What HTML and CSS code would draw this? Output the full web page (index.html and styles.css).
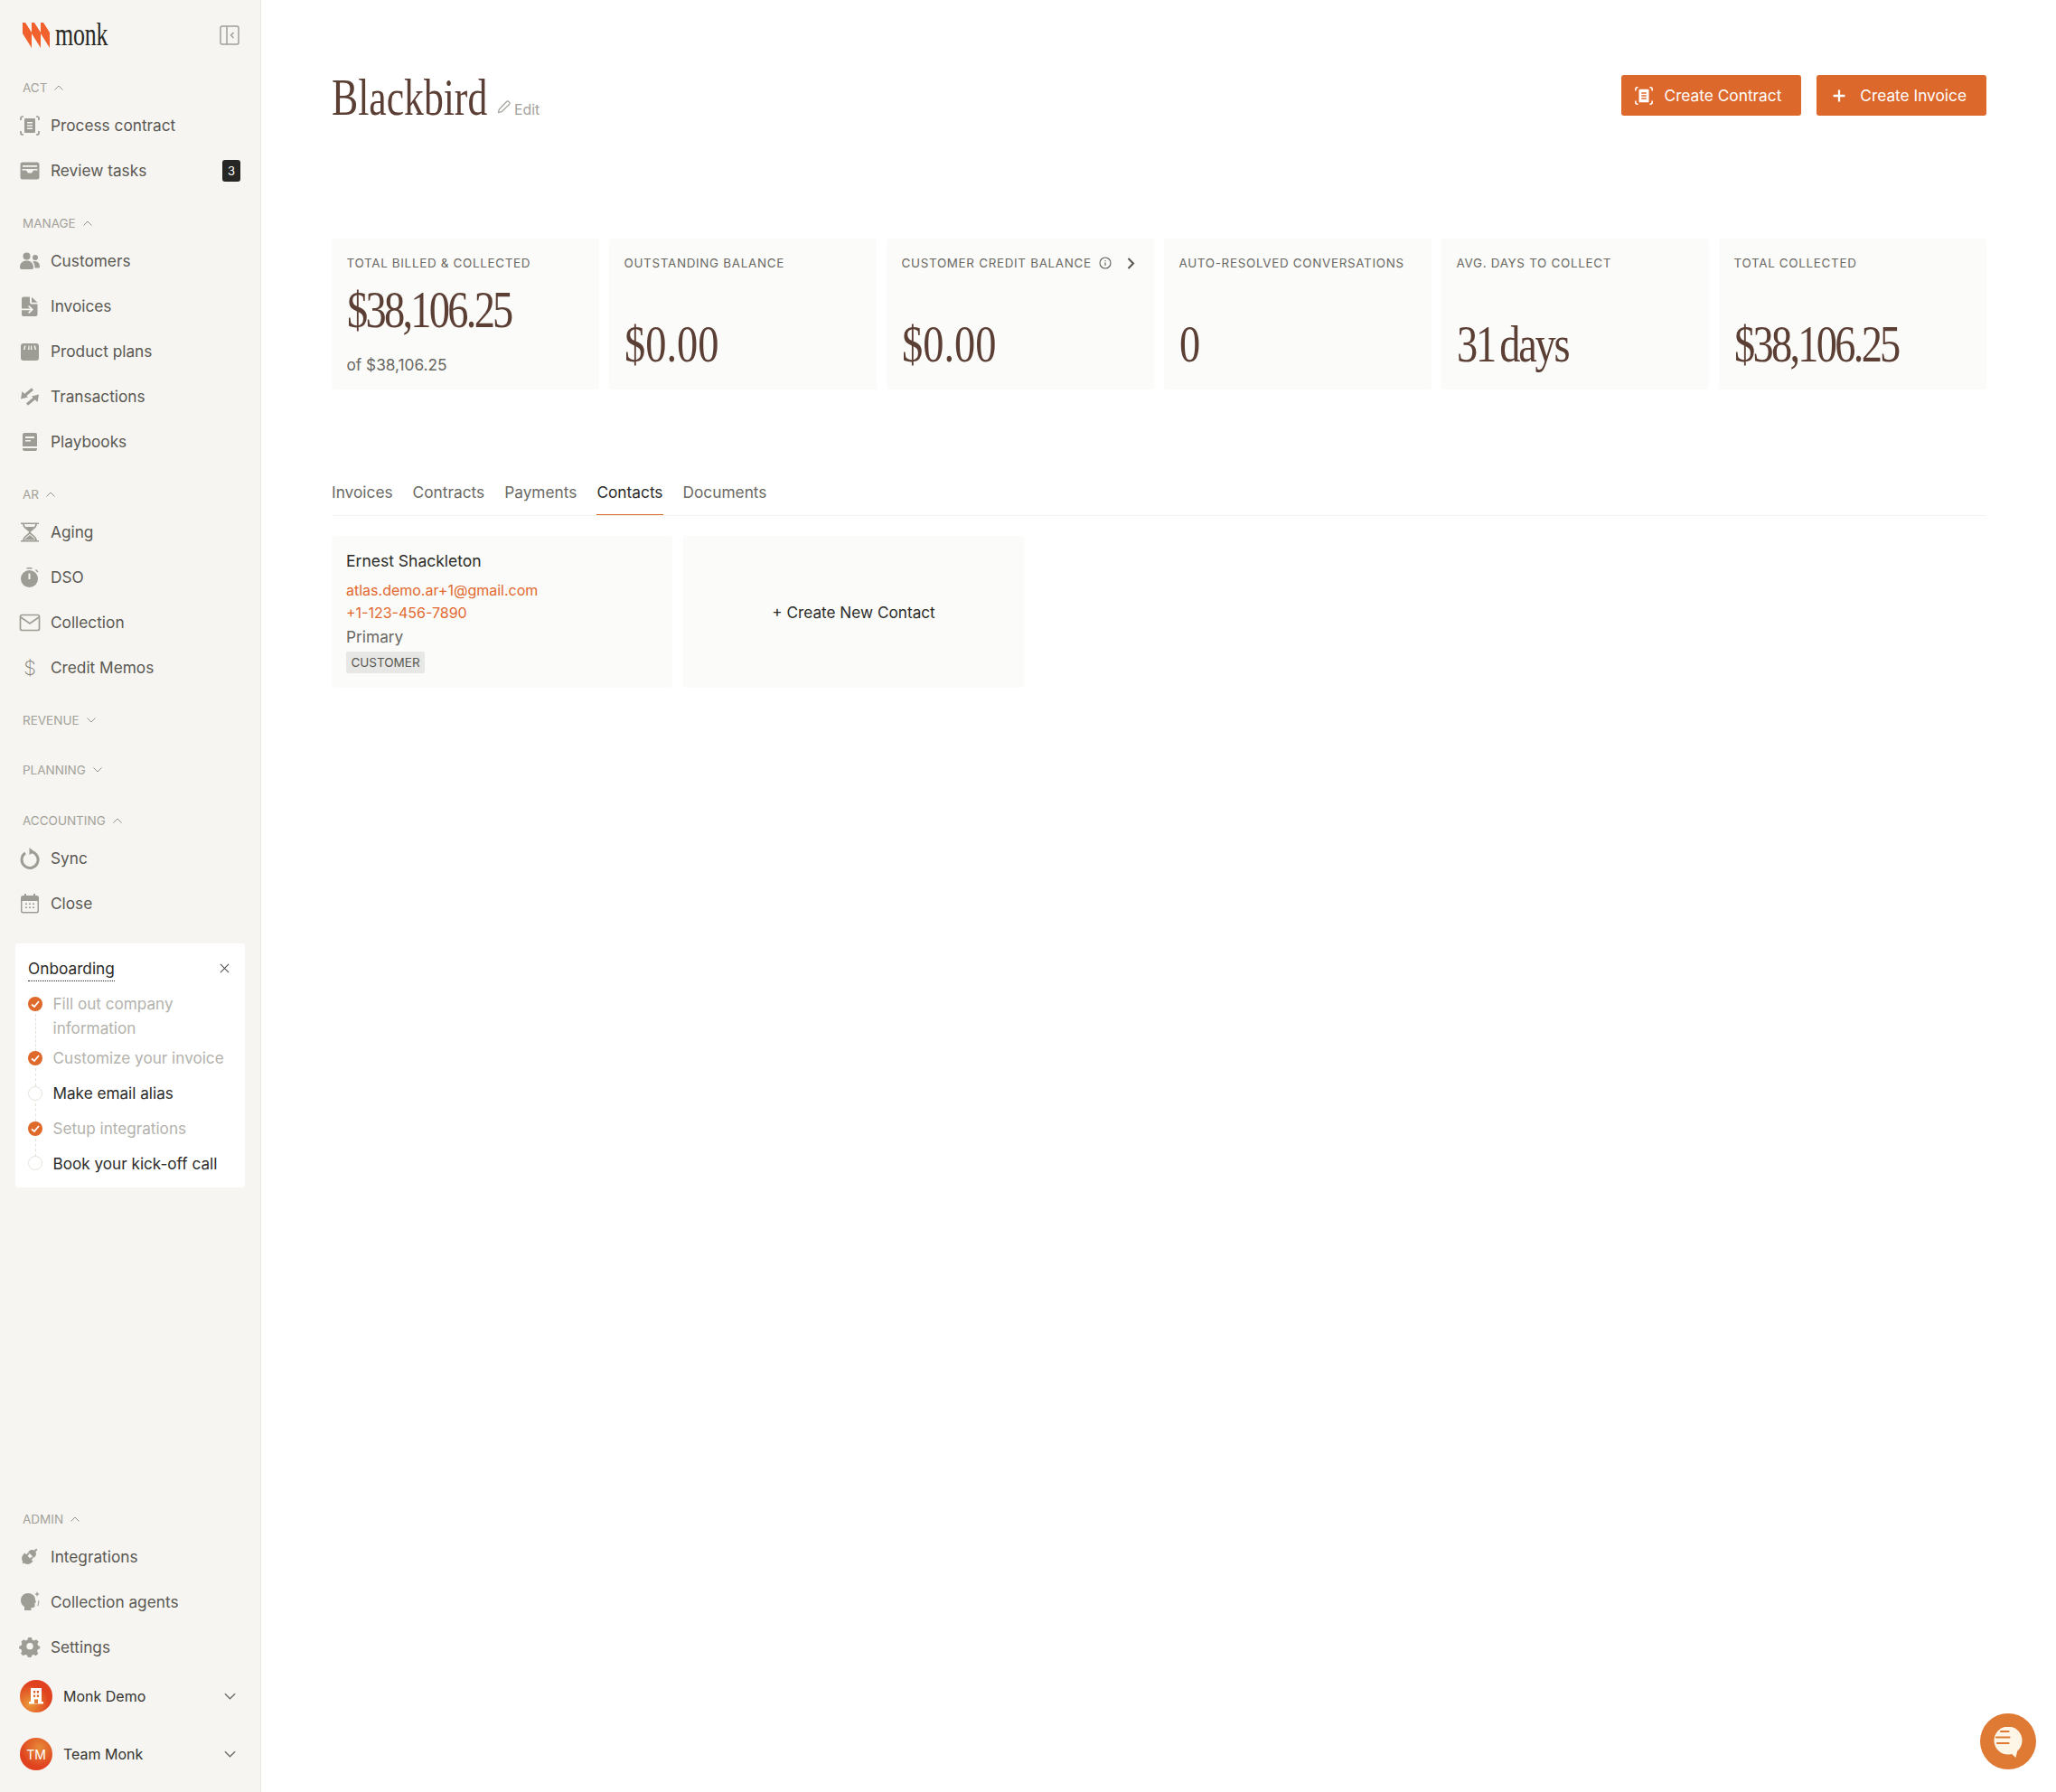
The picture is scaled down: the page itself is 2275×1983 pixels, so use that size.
FILE: index.html
```html
<!DOCTYPE html>
<html lang="en">
<head>
<meta charset="utf-8">
<title>Blackbird</title>
<link rel="stylesheet" href="styles.css">
</head>
<body>
<div class="app">
<aside class="sidebar">
  <div class="brand">
    <div class="logo">
      <svg class="logo-mark" viewBox="0 0 30 28"><path d="M0 0h3l7 11v17L0 12zM10 0h3l7 11v17L10 12zM20 0h3l7 11v17L20 12z"/></svg>
      <span class="logo-text">monk</span>
    </div>
    <svg class="collapse" viewBox="0 0 22 22"><rect x="1" y="1" width="20" height="20" rx="2"/><path d="M8 1v20M15.500 8l-3 3 3 3"/></svg>
  </div>

  <section class="nav-section">
    <div class="nav-head">ACT <svg class="chev" viewBox="0 0 10 6"><path d="M.5 5.500L5 1l4.500 4.500"/></svg></div>
    <a class="nav-item"><svg class="ico" viewBox="0 0 24 24"><path class="ln" d="M2 6V4a2 2 0 0 1 2-2h1M19 2h1a2 2 0 0 1 2 2v2M22 18v2a2 2 0 0 1-2 2h-1M5 22H4a2 2 0 0 1-2-2v-2"/><path fill-rule="evenodd" d="M7 4h10a1 1 0 0 1 1 1v14a1 1 0 0 1-1 1H7a1 1 0 0 1-1-1V5a1 1 0 0 1 1-1zm2 4v1.600h6V8zm0 3.200v1.600h6v-1.600zm0 3.200V16h6v-1.600z"/></svg>Process contract</a>
    <a class="nav-item"><svg class="ico" viewBox="0 0 24 24"><path fill-rule="evenodd" d="M4 2.500h16a2.500 2.500 0 0 1 2.500 2.500v14a2.500 2.500 0 0 1-2.500 2.500H4A2.500 2.500 0 0 1 1.500 19V5A2.500 2.500 0 0 1 4 2.500zM4 6v1.800h16V6zM3.500 10v1.500H8l2 3h4l2-3h4.500V10z"/></svg>Review tasks<span class="badge">3</span></a>
  </section>

  <section class="nav-section">
    <div class="nav-head">MANAGE <svg class="chev" viewBox="0 0 10 6"><path d="M.5 5.500L5 1l4.500 4.500"/></svg></div>
    <a class="nav-item"><svg class="ico" viewBox="0 0 24 24"><circle cx="8.500" cy="6.500" r="4"/><circle cx="18" cy="8" r="3"/><path d="M1 19c0-5 3-7.500 7.500-7.500S16 14 16 19c0 1.500-1 2-2 2H3c-1 0-2-.5-2-2zM17 12c3.500 0 6 2 6 6 0 1-.5 1.500-1.500 1.500h-4c0-3-.5-5.500-2.500-7z"/></svg>Customers</a>
    <a class="nav-item"><svg class="ico" viewBox="0 0 24 24"><path fill-rule="evenodd" d="M5 1.500h7v6a2 2 0 0 0 2 2h6.500V21a2 2 0 0 1-2 2H5a2 2 0 0 1-2-2V3.500a2 2 0 0 1 2-2zM14 1.800l6.500 6h-6.500zM3 14.500v1.800h9.500l-2.500 2.400 1.300 1.200 4.700-4.500-4.700-4.500-1.300 1.200 2.500 2.400z"/></svg>Invoices</a>
    <a class="nav-item"><svg class="ico" viewBox="0 0 24 24"><path fill-rule="evenodd" d="M5 3h14a3 3 0 0 1 3 3v13a3 3 0 0 1-3 3H5a3 3 0 0 1-3-3V6a3 3 0 0 1 3-3zM6 5.500L5 10h1.500l1-4.500zM10.500 5.500L10 10h1.500V5.500zM13 5.500V10h1.500L14 5.500zM16.500 5.500l1 4.500H19l-1-4.500z"/></svg>Product plans</a>
    <a class="nav-item"><svg class="ico" viewBox="0 0 24 24"><path class="ln ln-thick" d="M15 3.500L6 11M9 20.500l9-7.500"/><path d="M2 14.500L3.500 6l6.500 6.500zM22 9.500L20.500 18 14 11.500z"/></svg>Transactions</a>
    <a class="nav-item"><svg class="ico" viewBox="0 0 24 24"><path fill-rule="evenodd" d="M6 2h12a2 2 0 0 1 2 2v13H4V4a2 2 0 0 1 2-2zM7 6v2h10V6zm0 4v1.600h6V10zM4 19h16v1a2 2 0 0 1-2 2H6a2 2 0 0 1-2-2z"/></svg>Playbooks</a>
  </section>

  <section class="nav-section">
    <div class="nav-head">AR <svg class="chev" viewBox="0 0 10 6"><path d="M.5 5.500L5 1l4.500 4.500"/></svg></div>
    <a class="nav-item"><svg class="ico" viewBox="0 0 24 24"><path d="M2 1.500h20v1.500H2zM2 21h20v1.500H2z"/><path class="ln" d="M5 3c0 5 7 6.500 7 9s-7 4-7 9M19 3c0 5-7 6.500-7 9s7 4 7 9"/><path d="M7 6h10l-5 5zM5.500 20.500L12 15l6.500 5.500z"/></svg>Aging</a>
    <a class="nav-item"><svg class="ico" viewBox="0 0 24 24"><path fill-rule="evenodd" d="M8.500 1h6v1.500h-6zM11.500 4a9.500 9.500 0 1 1 0 19 9.500 9.500 0 0 1 0-19zM10.500 7.500v6.500h2V7.500zM19 3l2.500 2.500-1 1L18 4z"/></svg>DSO</a>
    <a class="nav-item"><svg class="ico" viewBox="0 0 24 24"><rect class="ln" x="1.500" y="3.500" width="21" height="17" rx="2"/><path class="ln" d="M2 6l10 7 10-7"/></svg>Collection</a>
    <a class="nav-item"><span class="ico-glyph">$</span>Credit Memos</a>
  </section>

  <section class="nav-section is-collapsed">
    <div class="nav-head">REVENUE <svg class="chev" viewBox="0 0 10 6"><path d="M.5.500L5 5 9.500.500"/></svg></div>
  </section>
  <section class="nav-section is-collapsed">
    <div class="nav-head">PLANNING <svg class="chev" viewBox="0 0 10 6"><path d="M.5.500L5 5 9.500.500"/></svg></div>
  </section>

  <section class="nav-section">
    <div class="nav-head">ACCOUNTING <svg class="chev" viewBox="0 0 10 6"><path d="M.5 5.500L5 1l4.500 4.500"/></svg></div>
    <a class="nav-item"><svg class="ico" viewBox="0 0 24 24"><path class="ln ln-thick" d="M7 6a9 9 0 1 0 6-1.500"/><path d="M11.500 0l5.500 4.500-5.500 3.500z"/></svg>Sync</a>
    <a class="nav-item"><svg class="ico" viewBox="0 0 24 24"><path fill-rule="evenodd" d="M6 1h2v2h8V1h2v2h1.500A2.500 2.500 0 0 1 22 5.500V20a2.500 2.500 0 0 1-2.500 2.500h-15A2.500 2.500 0 0 1 2 20V5.500A2.500 2.500 0 0 1 4.500 3H6zM3.500 9v11a1 1 0 0 0 1 1h15a1 1 0 0 0 1-1V9zM7 11.500h2v1.500H7zm4 0h2v1.500h-2zm4 0h2v1.500h-2zM7 15.500h2V17H7zm4 0h2V17h-2zm4 0h2V17h-2z"/></svg>Close</a>
  </section>

  <section class="onboarding">
    <div class="onb-head"><span class="onb-title">Onboarding</span><svg class="onb-close" viewBox="0 0 12 12"><path d="M1 1l10 10M11 1L1 11"/></svg></div>
    <ul class="steps">
      <li class="step is-done is-two"><span class="dot"><svg viewBox="0 0 16 16"><path d="M4 8.500l3 2.500 5-6"/></svg></span><span class="step-text">Fill out company information</span></li>
      <li class="step is-done"><span class="dot"><svg viewBox="0 0 16 16"><path d="M4 8.500l3 2.500 5-6"/></svg></span><span class="step-text">Customize your invoice</span></li>
      <li class="step"><span class="dot"></span><span class="step-text">Make email alias</span></li>
      <li class="step is-done"><span class="dot"><svg viewBox="0 0 16 16"><path d="M4 8.500l3 2.500 5-6"/></svg></span><span class="step-text">Setup integrations</span></li>
      <li class="step"><span class="dot"></span><span class="step-text">Book your kick-off call</span></li>
    </ul>
  </section>

  <section class="nav-section nav-bottom">
    <div class="nav-head">ADMIN <svg class="chev" viewBox="0 0 10 6"><path d="M.5 5.500L5 1l4.500 4.500"/></svg></div>
    <a class="nav-item"><svg class="ico" viewBox="0 0 24 24"><g transform="rotate(45 12 12) translate(0 1)"><path d="M7.500 7.500a4.500 4.500 0 0 1 9 0v1.500h-9zM11 0h2v4h-2zM5.500 12.500h13v2a6.500 6.500 0 0 1-13 0zM8 9.500h2v3H8zM14 9.500h2v3h-2zM11 19h2v3h-2z"/></g></svg>Integrations</a>
    <a class="nav-item"><svg class="ico" viewBox="0 0 24 24"><path d="M10 3c4.500 0 8 3 8 7 0 1 .5 2 1 3l-1.500 1v3c0 1-1 2-2 2h-2v3H6v-4c-2.500-1.500-4-4-4-7 0-4.500 3.500-8 8-8z"/><path d="M20 1l.8 2.200L23 4l-2.200.8L20 7l-.8-2.200L17 4l2.200-.8zM21.500 11l1 .3-1 6-1-.3z"/></svg>Collection agents</a>
    <a class="nav-item"><svg class="ico" viewBox="0 0 24 24"><path fill-rule="evenodd" d="M10 1.500h4l.7 2.800 2.500 1 2.500-1.400 2.800 2.800-1.400 2.500 1 2.500 2 .3v3l-2.400.7-1 2.500 1.400 2.500-2.800 2.800-2.500-1.400-2.500 1-.7 2.400h-4l-.7-2.400-2.500-1-2.500 1.400-2.800-2.800 1.400-2.500-1-2.500-2.400-.7v-3l2.400-.7 1-2.500L1.600 6.700l2.800-2.800 2.500 1.400 2.400-1zM12 8a4 4 0 1 0 0 8 4 4 0 0 0 0-8z" transform="matrix(.92 0 0 .92 1 .6)"/></svg>Settings</a>
    <div class="accounts">
      <div class="account"><span class="avatar"><svg viewBox="0 0 24 24"><path fill-rule="evenodd" d="M6 3h12v15h2v2.500H4V18h2zM9 6v2.500h2.200V6zm3.800 0v2.500H15V6zM9 10.500V13h2.200v-2.500zm3.800 0V13H15v-2.500zM10 15.500V20h4v-4.500z"/></svg></span><span class="account-name">Monk Demo</span><svg class="acct-chev" viewBox="0 0 14 8"><path d="M1 1l6 6 6-6"/></svg></div>
      <div class="account"><span class="avatar avatar-alt">TM</span><span class="account-name">Team Monk</span><svg class="acct-chev" viewBox="0 0 14 8"><path d="M1 1l6 6 6-6"/></svg></div>
    </div>
  </section>
</aside>

<main class="main">
  <header class="page-head">
    <div class="title-wrap">
      <h1 class="title">Blackbird</h1>
      <a class="edit"><svg viewBox="0 0 16 16"><path d="M1.500 14.500l.8-3.500L10.500 2.500a1.700 1.700 0 0 1 2.500 0l.5.500a1.700 1.700 0 0 1 0 2.500L5 13.700z"/></svg>Edit</a>
    </div>
    <div class="actions">
      <button class="btn"><svg viewBox="0 0 24 24"><path class="btn-ln" d="M2 6V4a2 2 0 0 1 2-2h1M19 2h1a2 2 0 0 1 2 2v2M22 18v2a2 2 0 0 1-2 2h-1M5 22H4a2 2 0 0 1-2-2v-2"/><path class="btn-fill" fill-rule="evenodd" d="M7 4h10a1 1 0 0 1 1 1v14a1 1 0 0 1-1 1H7a1 1 0 0 1-1-1V5a1 1 0 0 1 1-1zm2 4v1.600h6V8zm0 3.200v1.600h6v-1.600zm0 3.200V16h6v-1.600z"/></svg>Create Contract</button>
      <button class="btn"><svg viewBox="0 0 24 24"><path class="btn-ln btn-ln-thick" d="M12 5v14M5 12h14"/></svg>Create Invoice</button>
    </div>
  </header>

  <section class="stats">
    <div class="stat"><div class="stat-label">TOTAL BILLED &amp; COLLECTED</div><div class="stat-value is-top"><span class="serif-num is-long">$38,106.25</span></div><div class="stat-sub">of $38,106.25</div></div>
    <div class="stat"><div class="stat-label">OUTSTANDING BALANCE</div><div class="stat-value"><span class="serif-num">$0.00</span></div></div>
    <div class="stat"><div class="stat-label">CUSTOMER CREDIT BALANCE <svg class="info" viewBox="0 0 14 14"><circle cx="7" cy="7" r="6"/><path d="M7 6.500v3.500M7 4v1.200"/></svg><svg class="stat-arrow" viewBox="0 0 9 13"><path d="M1.500 1l5.500 5.500L1.500 12"/></svg></div><div class="stat-value"><span class="serif-num">$0.00</span></div></div>
    <div class="stat"><div class="stat-label">AUTO-RESOLVED CONVERSATIONS</div><div class="stat-value"><span class="serif-num">0</span></div></div>
    <div class="stat"><div class="stat-label">AVG. DAYS TO COLLECT</div><div class="stat-value"><span class="serif-num is-days">31 days</span></div></div>
    <div class="stat"><div class="stat-label">TOTAL COLLECTED</div><div class="stat-value"><span class="serif-num is-long">$38,106.25</span></div></div>
  </section>

  <nav class="tabs">
    <a class="tab">Invoices</a>
    <a class="tab">Contracts</a>
    <a class="tab">Payments</a>
    <a class="tab is-active">Contacts</a>
    <a class="tab">Documents</a>
  </nav>

  <section class="contacts">
    <div class="contact">
      <div class="contact-name">Ernest Shackleton</div>
      <div class="contact-link contact-email">atlas.demo.ar+1@gmail.com</div>
      <div class="contact-link">+1-123-456-7890</div>
      <div class="contact-role">Primary</div>
      <span class="tag">CUSTOMER</span>
    </div>
    <div class="contact contact-new">+ Create New Contact</div>
  </section>
</main>
</div>
<button class="chat" aria-label="Chat"><svg viewBox="0 0 34 36"><circle class="chat-bubble" cx="16" cy="15" r="15.500"/><path class="chat-bubble" d="M18 28l9-5-2.500 11z"/><path class="chat-lines" d="M8 5h8.500M3 11.500h14.500M4 18h12.500"/></svg></button>
</body>
</html>
```
FILE: styles.css
```css
* { box-sizing: border-box; }
html, body { margin: 0; height: 100%; }
body { font-family: Inter, "Liberation Sans", sans-serif; background: #fff; color: #2b2b29; overflow: hidden; }
.app { display: flex; height: 1983px; }

.sidebar { width: 289px; flex: none; background: #f6f5f1; border-right: 1px solid #e9e7e0; display: flex; flex-direction: column; height: 100%; }
.brand { height: 80.5px; padding: 25px 23px 0 25px; display: flex; justify-content: space-between; align-items: flex-start; }
.logo { display: flex; align-items: flex-start; gap: 6px; }
.logo-mark { width: 30px; height: 28px; fill: #f0612d; display: block; }
.logo-text { font-family: "Liberation Serif", serif; font-size: 35px; line-height: 28px; color: #2a2a27; display: inline-block; transform: scaleX(.74); transform-origin: left; letter-spacing: -.3px; }
.collapse { width: 22px; height: 22px; fill: none; stroke: #a09f98; stroke-width: 1.5; margin-top: 3px; }

.nav-section { margin-bottom: 17px; }
.nav-section.is-collapsed { margin-bottom: 22px; }
.nav-section.is-collapsed + .is-collapsed { margin-bottom: 23px; }
.nav-head { height: 33px; padding-left: 25px; display: flex; align-items: center; gap: 8px; font-size: 13.500px; color: #a3a29a; }
.chev { width: 10px; height: 6px; fill: none; stroke: #96958d; stroke-width: 1; }
.nav-item { height: 50px; padding: 0 22px 0 21px; display: flex; align-items: center; gap: 11px; font-size: 17.250px; color: #5a5853; }
.ico { width: 24px; height: 24px; flex: none; fill: #9e9d95; }
.ln { fill: none; stroke: #9e9d95; stroke-width: 1.700; }
.ln-thick { stroke-width: 3; }
.ico-glyph { width: 24px; flex: none; text-align: center; font-size: 22px; font-weight: 200; color: #7f7e77; }
.badge { margin-left: auto; width: 20px; height: 24px; border-radius: 3px; background: #262624; color: #fff; font-size: 13px; display: flex; align-items: center; justify-content: center; }

.onboarding { margin: 2.500px 17px 0; width: 254px; height: 270px; background: #fff; border-radius: 3px; padding: 0 14px; }
.onb-head { height: 42px; padding-top: 14px; display: flex; justify-content: space-between; align-items: flex-start; }
.onb-title { font-size: 17.250px; line-height: 28px; color: #2b2b29; border-bottom: 1px dotted #2b2b29; height: 28px; }
.onb-close { width: 11px; height: 11px; fill: none; stroke: #55534e; stroke-width: 1.200; margin: 8px 3px 0 0; }
.steps { list-style: none; margin: 11px 0 0; padding: 0; }
.step { position: relative; display: flex; gap: 11.500px; font-size: 17.150px; line-height: 27px; height: 39px; color: #2b2b29; }
.step.is-two { height: 60px; }
.step.is-done { color: #b3b2ac; }
.step:not(:last-child)::after { content: ""; position: absolute; left: 7.500px; top: 25px; bottom: -6px; border-left: 1px dashed #e3e1d9; }
.step:nth-child(4) { height: 38.5px; }
.dot { width: 16px; height: 16px; margin-top: 5.500px; flex: none; border-radius: 50%; border: 1px solid #e6e4dc; display: flex; }
.is-done .dot { background: #df682b; border: 0; }
.dot svg { width: 16px; height: 16px; fill: none; stroke: #fff; stroke-width: 1.800; }

.nav-bottom { margin-top: auto; margin-bottom: 0; padding-bottom: 12px; }
.accounts { display: flex; flex-direction: column; gap: 4px; }
.account { height: 60px; padding: 0 27px 0 22px; display: flex; align-items: center; gap: 12px; font-size: 16px; color: #34332f; }
.avatar { width: 36px; height: 36px; border-radius: 50%; background: radial-gradient(circle at 30% 75%, #ea9a3a, #e0411f 60%); color: #fff; display: flex; align-items: center; justify-content: center; font-size: 14px; flex: none; }
.avatar svg { width: 24px; height: 24px; fill: #fff; }
.avatar-alt { background: radial-gradient(circle at 60% 30%, #e68b38, #e0411f 65%); }
.account-name { flex: 1; }
.acct-chev { width: 13px; height: 8px; fill: none; stroke: #6e6c66; stroke-width: 1.500; }

.main { flex: 1; min-width: 0; padding: 83px 77px 0 78px; }
.page-head { display: flex; justify-content: space-between; height: 45px; }
.title-wrap { display: flex; align-items: flex-start; }
.title { margin: 0; font-family: "Liberation Serif", serif; font-weight: 400; font-size: 56px; line-height: 50px; color: #5b3e34; display: inline-block; width: 173px; white-space: nowrap; transform: scaleX(.78); transform-origin: left; }
.edit { display: flex; align-items: flex-end; gap: 3px; margin: 24px 0 0 10px; font-size: 15.800px; color: #a3a29a; height: 24px; }
.edit svg { width: 16px; height: 16px; fill: none; stroke: #a3a29a; stroke-width: 1.200; margin-bottom: 5px; }
.actions { display: flex; gap: 17px; }
.btn { height: 45px; border: 0; border-radius: 3px; background: #dd682b; color: #fff; font: 400 17.300px Inter, sans-serif; padding: 0 22px 0 14px; display: flex; align-items: center; gap: 12px; }
.btn svg { width: 22px; height: 22px; }
.btn-ln { fill: none; stroke: #fff; stroke-width: 1.700; }
.btn-ln-thick { stroke-width: 2.500; }
.btn-fill { fill: #fff; }

.stats { display: grid; grid-template-columns: repeat(6, 1fr); gap: 11px; margin-top: 136px; height: 167px; }
.stat { background: #fbfbf9; border-radius: 3px; padding: 17px 16px 15px 16.5px; display: flex; flex-direction: column; min-width: 0; }
.stat-label { font-size: 13.400px; line-height: 20px; letter-spacing: .7px; color: #696863; display: flex; align-items: center; white-space: pre; }
.info { width: 14px; height: 14px; margin-left: 4px; fill: none; stroke: #5f5e59; stroke-width: 1.100; }
.stat-arrow { width: 9px; height: 13px; margin-left: 17px; fill: none; stroke: #55534e; stroke-width: 2; }
.stat-value { height: 60px; margin-top: auto; margin-bottom: 7px; font-size: 58px; line-height: 60px; }
.stat-value.is-top { margin-top: 10px; margin-bottom: 0; }
.serif-num { font-family: "Liberation Serif", serif; color: #5b3e34; display: inline-block; white-space: nowrap; transform: scaleX(.8); transform-origin: left; }
.serif-num.is-long { letter-spacing: -3.400px; }
.serif-num.is-days { letter-spacing: -2.800px; word-spacing: -5px; }
.stat-sub { margin-top: 21px; font-size: 17.250px; line-height: 24px; color: #696863; }

.tabs { display: flex; gap: 22px; height: 51px; margin-top: 89px; border-bottom: 1px solid #f3f2ec; }
.tab { height: 50px; line-height: 50px; font-size: 17.300px; color: #6b6a65; }
.tab.is-active { color: #2b2b29; border-bottom: 1.500px solid #dd682b; height: 50px; }

.contacts { display: flex; gap: 12px; margin-top: 22px; }
.contact { width: 377px; height: 168px; background: #fbfbf9; border-radius: 3px; padding: 16px; }
.contact-name { font-size: 17.500px; line-height: 24px; color: #2b2b29; }
.contact-link { font-size: 16px; line-height: 25px; color: #e2692f; }
.contact-email { margin-top: 7.500px; }
.contact-role { font-size: 17.300px; line-height: 25px; color: #696863; margin-top: 1px; }
.tag { display: block; width: 87px; height: 24px; margin-top: 4.500px; background: #e7e7e5; border-radius: 2px; font-size: 13.500px; line-height: 24px; text-align: center; color: #5a5853; }
.contact-new { display: flex; align-items: center; justify-content: center; font-size: 17.200px; color: #2b2b29; }

.chat { position: fixed; left: 2191px; top: 1896px; width: 62px; height: 62px; border: 0; border-radius: 50%; background: #df7a35; padding: 15px 13px 11px 15px; display: flex; }
.chat svg { width: 34px; height: 36px; }
.chat-bubble { fill: #fdf6e6; }
.chat-lines { fill: none; stroke: #df7a35; stroke-width: 2.200; stroke-linecap: round; }
```
